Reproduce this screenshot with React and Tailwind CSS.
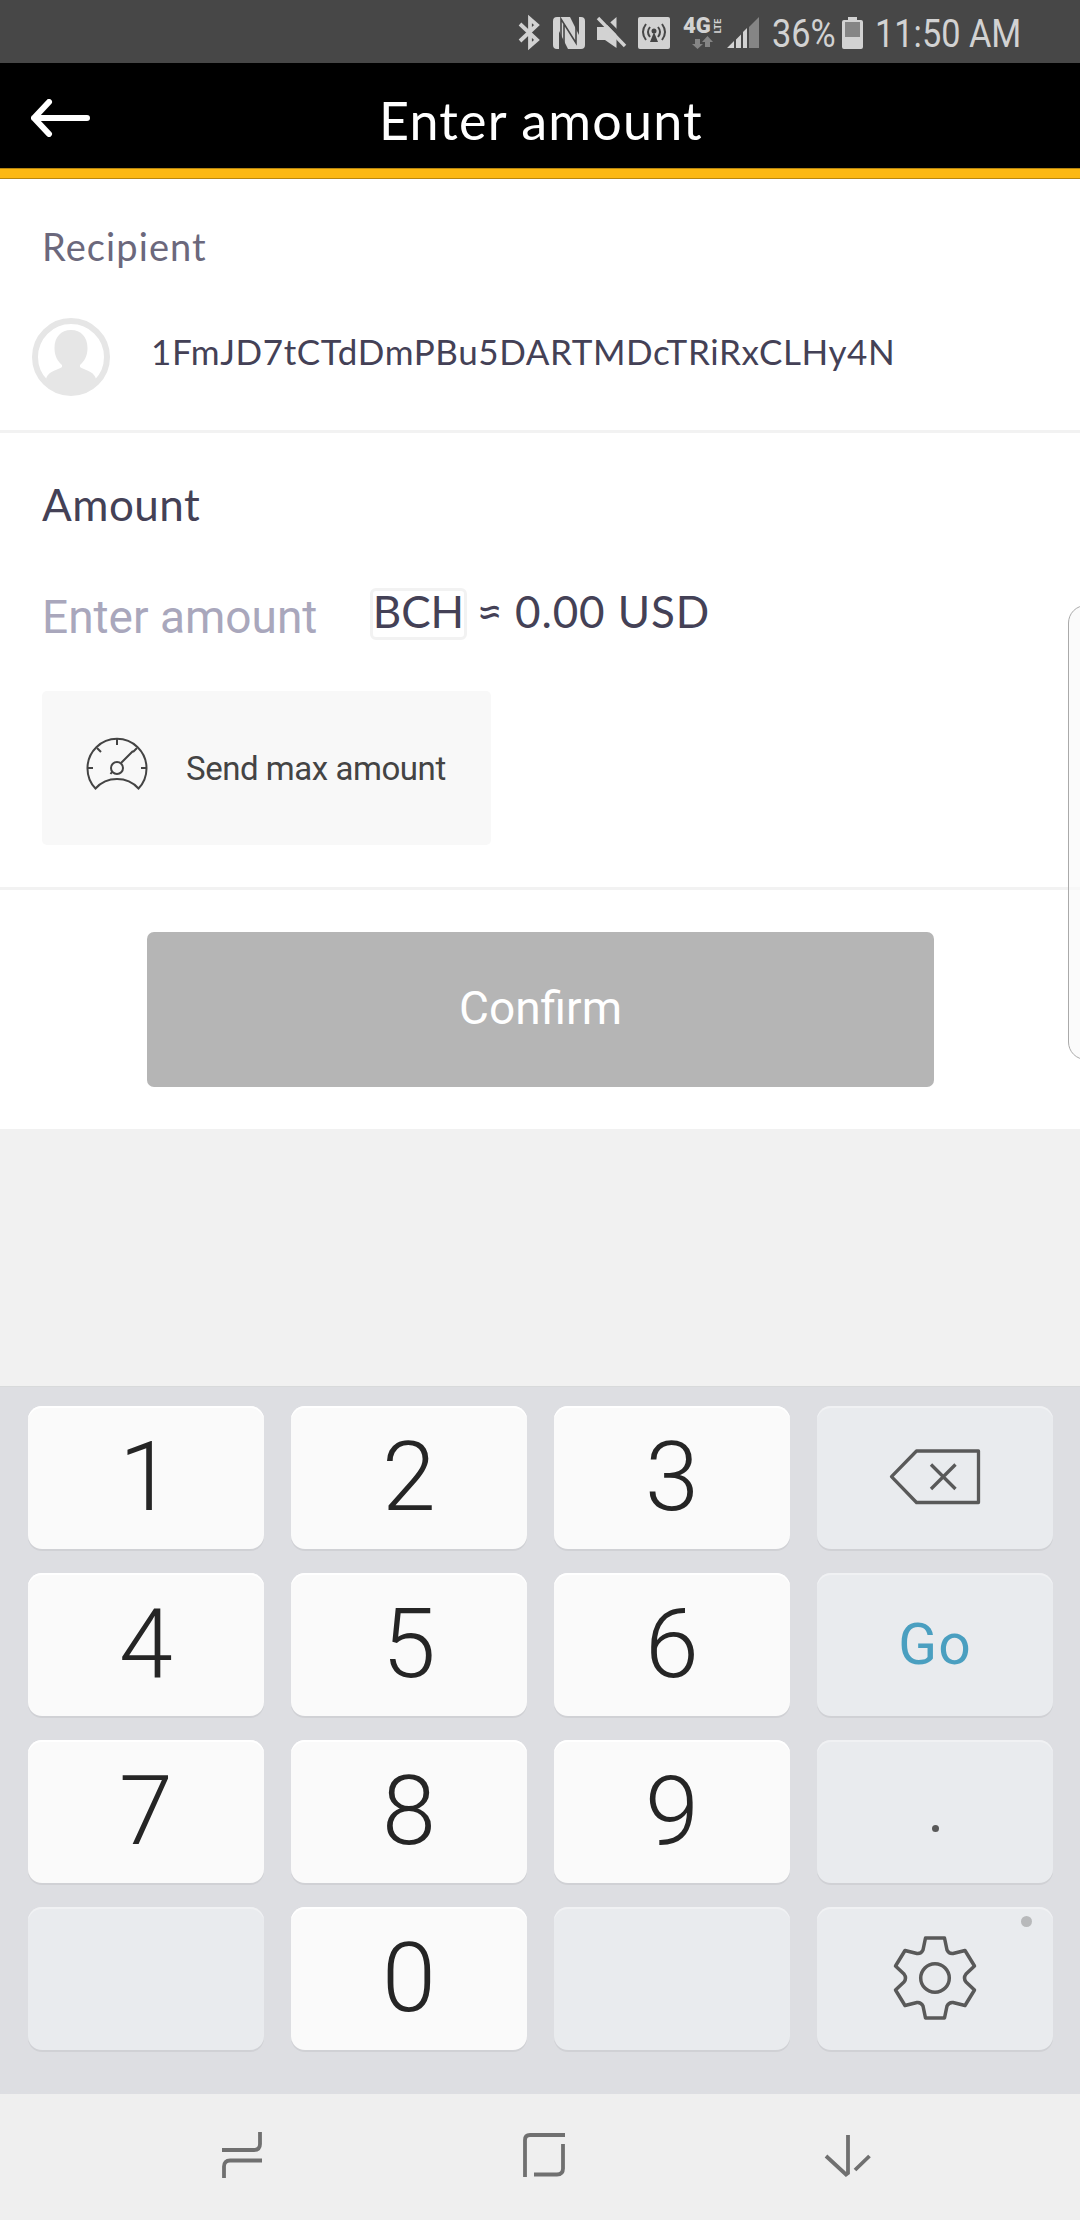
import clsx from "clsx";

const KEYS = ["1", "2", "3", "del", "4", "5", "6", "go", "7", "8", "9", "dot", "", "0", "", "settings"];

function StatusIcons() {
  return (
    <svg width="250" height="40" viewBox="515 12 250 40" fill="#d2d2d2">
      {/* bluetooth */}
      <path d="M520 24 L537 40 L530 46 V19 L537 25 L520 41" fill="none" stroke="#d2d2d2" strokeWidth="3.800" />
      {/* nfc */}
      <path d="M557 17h13l9 18V17h2q4 0 4 4v24q0 4-4 4h-13l-9-18v18h-2q-4 0-4-4V21q0-4 4-4z" />
      <path d="M561 49V19l15 24V17M564 24v25M576 17v25" fill="none" stroke="#474747" strokeWidth="1.6" />
      {/* muted speaker */}
      <path d="M597 27h8l11.500-10v31l-11.500-8h-8z" />
      <path d="M600 15 L630 45" stroke="#474747" strokeWidth="4" />
      <path d="M598 18 L625 46" stroke="#d2d2d2" strokeWidth="3.4" />
      {/* hotspot */}
      <rect x="638" y="17" width="32" height="32" rx="2" />
      <g fill="none" stroke="#474747" strokeWidth="2">
        <path d="M646 24q-6 8 0 16M662 24q6 8 0 16M650 27q-4 5 0 10M658 27q4 5 0 10" />
      </g>
      <circle cx="654" cy="31" r="2.500" fill="#474747" />
      <path d="M654 32l4 10h-8z" fill="#474747" />
      {/* data arrows */}
      <path d="M695 39h5v5h3l-5.500 5-5.500-5h3zM705 47h5v-5h3l-5.500-6-5.500 6h3z" fill="#858585" />
      {/* signal */}
      <path d="M727 48l7-7v7zM736 39.500l5-5V48h-5zM743 32l4-4v20h-4z" />
      <path d="M749 27l10-10v31h-10z" fill="#858585" />
    </svg>
  );
}

function StatusBar() {
  return (
    <div className="flex h-[63px] items-center bg-[#474747] pl-[515px] text-[#d2d2d2]">
      <div className="relative h-10 w-[250px] shrink-0">
        <StatusIcons />
        <span className="absolute left-[168px] top-[3px] text-[22px] leading-[22px] font-black">4G</span>
        <span className="absolute left-[194px] top-[9px] w-[18px] -rotate-90 text-center text-[9px] leading-[10px] font-bold">LTE</span>
      </div>
      <span className="ml-[7px] mt-[5px] w-[64px] origin-left scale-x-[.88] text-[39px] leading-none">36%</span>
      <svg className="ml-[6px] mt-[3px] shrink-0" width="21" height="32" viewBox="0 0 21 32">
        <path d="M6 0h9v3h4q2 0 2 2v25q0 2-2 2H2q-2 0-2-2V5q0-2 2-2h4z" fill="#d2d2d2" />
        <rect x="3" y="5" width="15" height="15" fill="#858585" />
      </svg>
      <span className="ml-[12px] mt-[5px] origin-left scale-x-[.88] whitespace-nowrap text-[39px] leading-none">11:50 AM</span>
    </div>
  );
}

function Avatar() {
  return (
    <svg className="shrink-0" width="78" height="78" viewBox="0 0 78 78" fill="#e6e6e6">
      <circle cx="39" cy="39" r="36" fill="none" stroke="#e6e6e6" strokeWidth="6" />
      <path d="M39 12c10 0 16.500 7 16.500 18 0 8-3 13-7.500 17v2c3 3 13 3 16 11.500C58 70 50 76 39 76S20 70 14 60.500C17 52 27 52 30 49v-2c-4.500-4-7.500-9-7.500-17C22.500 19 29 12 39 12z" />
    </svg>
  );
}

function Gauge() {
  return (
    <svg className="-mt-2 shrink-0" width="62" height="54" viewBox="0 0 62 54" fill="none" stroke="#444" strokeWidth="2">
      <path d="M9.500 51.500A29.500 29.500 0 1 1 52.500 51.500Q44 42 31 42T9.500 51.500z" />
      <path d="M31 1v7M1.500 31H7M55 31h5.500M11 11l4 4M51 11l-4 4" />
      <circle cx="31" cy="31" r="6" />
      <path d="M35 26L47 14M26 35l-1.500 2" />
    </svg>
  );
}

function KeyContent({ name }) {
  if (name === "del")
    return (
      <svg width="92" height="58" viewBox="0 0 92 58" fill="none" stroke="#595959" strokeWidth="3.3" strokeLinejoin="round">
        <path d="M27.500 3H89.500V54.500H27.500L2.500 28.700z" />
        <path d="M42 16.500L66.500 41M66.500 16.500L42 41" />
      </svg>
    );
  if (name === "go") return <span className="text-[57px] leading-none tracking-[1px] text-[#4a9fc0]">Go</span>;
  if (name === "dot") return <span className="mt-[34px] size-[7px] rounded-full bg-[#595959]" />;
  if (name === "settings")
    return (
      <>
        <svg width="84" height="86" viewBox="-42 -43 84 86" fill="none" stroke="#595959" strokeWidth="3.5" strokeLinejoin="round">
          <path d="M-9.500-40H9.500L12-28Q14-24 18-24.500L30-27.500L39.500-12L31-4Q28 0 31 4L39.500 12L30 27.500L18 24.500Q14 24 12 28L9.500 40H-9.500L-12 28Q-14 24-18 24.500L-30 27.500L-39.500 12L-31 4Q-28 0-31-4L-39.500-12L-30-27.500L-18-24.500Q-14-24-12-28z" />
          <circle r="14.300" />
        </svg>
        <span className="absolute right-[21px] top-[9px] size-[11px] rounded-full bg-[#b8b9bb]" />
      </>
    );
  return <span className="text-[97px] leading-none font-light text-[#252525]">{name}</span>;
}

function Keyboard() {
  return (
    <div className="grid h-[708px] grid-cols-[repeat(4,236px)] content-start gap-x-[27px] gap-y-6 border-t border-[#d8dadb] bg-[#dddee2] pl-7 pt-[19px]">
      {KEYS.map((k, i) => (
        <button
          key={i}
          className={clsx(
            "relative flex h-[143px] items-center justify-center rounded-[14px] pb-px",
            /\d/.test(k)
              ? "bg-[#fafafa] shadow-[inset_0_2px_0_#fff,0_2px_0_#d0d1d5]"
              : "bg-[#e9ebee] shadow-[inset_0_2px_0_#f0f1f3,0_2px_0_#d0d1d5]"
          )}
        >
          <KeyContent name={k} />
        </button>
      ))}
    </div>
  );
}

function NavBar() {
  return (
    <div className="flex h-[126px] items-start bg-[#efefef] pl-[221px] pt-[37px]">
      <svg width="42" height="48" viewBox="0 0 42 48" fill="none" stroke="#707070" strokeWidth="3.800">
        <path d="M1 19H33Q39 19 39 13V1M41 29.500H9Q3 29.500 3 35.500V47" />
      </svg>
      <svg className="ml-[259px]" width="44" height="48" viewBox="0 0 44 48" fill="none" stroke="#707070" strokeWidth="3.800">
        <path d="M3 46V9Q3 4 8 4H43M12 43.500H35Q41 43.500 41 37.500V13" />
      </svg>
      <svg className="ml-[258px]" width="48" height="48" viewBox="0 0 48 48" fill="none" stroke="#707070" strokeWidth="3.800">
        <path d="M2 25L22 43.500L24 42V4M45.500 25L31 39" />
      </svg>
    </div>
  );
}

export default function App() {
  return (
    <div className="relative h-[2220px] w-[1080px] overflow-hidden bg-[#f1f1f1] font-['Roboto',sans-serif]">
      <StatusBar />

      <header className="flex h-[105px] items-start bg-black pl-[31px] font-['Lato',sans-serif] text-white">
        <svg className="mt-[36px] shrink-0" width="59" height="38" viewBox="0 0 59 38" fill="none" stroke="#fff" strokeWidth="6" strokeLinecap="round" strokeLinejoin="round">
          <path d="M3 19H56M18 3L3 19L18 35" />
        </svg>
        <h1 className="ml-[289px] mt-[25px] whitespace-nowrap text-[52px] leading-[64px] tracking-[1.200px]">Enter amount</h1>
      </header>
      <div className="h-[11px] border-y border-[#b8860f] bg-[#fcb813]" />

      <main className="h-[950px] bg-white font-['Lato',sans-serif] text-[#444156]">
        <section className="h-[254px] border-b-[3px] border-[#f2f2f2] pt-[43px]">
          <h2 className="pl-[42px] text-[38px] leading-[48px] tracking-[1.100px] text-[#6b687c]">Recipient</h2>
          <div className="mt-[48px] flex items-start pl-8">
            <Avatar />
            <span className="ml-[41px] mt-[9px] whitespace-nowrap text-[35px] leading-[48px] tracking-[0.600px]">1FmJD7tCTdDmPBu5DARTMDcTRiRxCLHy4N</span>
          </div>
        </section>

        <section className="h-[457px] border-b-[3px] border-[#f2f2f2] pt-[43px]">
          <h2 className="pl-[42px] text-[44px] leading-[56px] tracking-[0.500px]">Amount</h2>
          <div className="mt-[56px] flex h-[52px] items-start pl-[42px]">
            <span className="mt-[2px] w-[328px] whitespace-nowrap font-['Roboto',sans-serif] text-[46px] leading-[54px] text-[#a9a7bc]">Enter amount</span>
            <span className="flex h-[52px] w-[97px] items-start justify-center rounded-[6px] border-[3px] border-[#f2f2f2] text-[44px] leading-[40px]">BCH</span>
            <span className="ml-[12px] mt-px w-[24px] -scale-x-100 text-center text-[46px] leading-[44px]">≈</span>
            <span className="ml-[12px] mt-px whitespace-nowrap text-[44px] leading-[44px] tracking-[0.900px]">0.00 USD</span>
          </div>
          <button className="ml-[42px] mt-[51px] flex h-[154px] w-[449px] items-center rounded-[5px] bg-[#f8f8f8] pl-[44px] font-['Roboto',sans-serif] text-[#444]">
            <Gauge />
            <span className="ml-[38px] mt-[2px] whitespace-nowrap text-[33px] tracking-[-0.450px]">Send max amount</span>
          </button>
        </section>

        <button className="ml-[147px] mt-[42px] flex h-[155px] w-[787px] items-center justify-center rounded-[7px] bg-[#b5b5b5] pb-[2px] font-['Roboto',sans-serif] text-[46px] text-white">
          Confirm
        </button>
      </main>

      <div className="h-[257px]" />
      <Keyboard />
      <NavBar />

      {/* edge panel handle */}
      <div className="absolute -right-[25px] top-[605px] h-[455px] w-[37px] rounded-[18px] border border-[#aaa] bg-[#fafafa]/70" />
    </div>
  );
}
